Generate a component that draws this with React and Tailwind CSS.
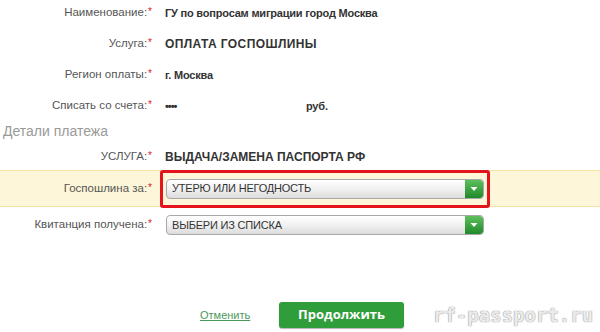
import React from "react";

const Star = () => <span className="text-[#e02020] align-top text-[10px] ml-[1px]">*</span>;

function Row({ label, children, className = "", small = false }) {
  return (
    <div className={`flex items-center ${className}`}>
      <div className="w-[152px] text-right text-[11.5px] text-[#555] pr-0">
        {label}:<Star />
      </div>
      <div className={`pl-[13px] font-bold text-[#333] flex items-center ${small ? "text-[11px] tracking-[-0.2px]" : "text-[12px]"}`}>{children}</div>
    </div>
  );
}

function Select({ text }) {
  return (
    <div className="w-[318px] h-[20px] rounded-[4px] border border-[#a8a8a8] bg-gradient-to-b from-[#ffffff] via-[#f1f1f1] to-[#dcdcdc] flex items-center justify-between overflow-hidden shadow-[inset_0_1px_0_#fff]">
      <span className="pl-[5px] text-[11px] tracking-[-0.2px] text-[#333] font-normal">{text}</span>
      <div className="w-[18px] h-full bg-gradient-to-b from-[#5cc05c] to-[#1e8a2a] flex items-center justify-center rounded-r-[3px]">
        <svg width="8" height="6" viewBox="0 0 8 6"><path d="M0.5 1 L7.5 1 L4 5 Z" fill="#fff" /></svg>
      </div>
    </div>
  );
}

export default function App() {
  return (
    <div className="w-[600px] h-[332px] bg-white overflow-hidden relative" style={{ fontFamily: '"Liberation Sans", Arial, sans-serif' }}>
      <div className="flex flex-col">
        <Row small label="Наименование" className="h-[14px] mt-[6px]">ГУ по вопросам миграции город Москва</Row>
        <Row label="Услуга" className="h-[14px] mt-[17px]"><span className="tracking-[0.4px]">ОПЛАТА ГОСПОШЛИНЫ</span></Row>
        <Row small label="Регион оплаты" className="h-[14px] mt-[17px]">г. Москва</Row>
        <Row small label="Списать со счета" className="h-[14px] mt-[17px]">
          <span className="w-[141px] tracking-[-1px]">••••</span>
          <span>руб.</span>
        </Row>
        <div className="mt-[10px] pl-[3px] text-[14px] text-[#9a9a9a] h-[16px] leading-[16px]">Детали платежа</div>
        <Row label="УСЛУГА" className="h-[14px] mt-[11px]">ВЫДАЧА/ЗАМЕНА ПАСПОРТА РФ</Row>
        <div className="mt-[6px] h-[37px] bg-[#fdf6d8] border-y border-[#f3e2a6] flex items-center relative">
          <div className="w-[152px] text-right text-[11.5px] text-[#555]">
            Госпошлина за:<Star />
          </div>
          <div className="ml-[8px] border-[3px] border-[#e3141c] rounded-[3px] px-[3px] py-[6px]">
            <Select text="УТЕРЮ ИЛИ НЕГОДНОСТЬ" />
          </div>
        </div>
        <div className="mt-[8px] flex items-center h-[20px]">
          <div className="w-[152px] text-right text-[11.5px] text-[#555]">
            Квитанция получена:<Star />
          </div>
          <div className="ml-[14px]">
            <Select text="ВЫБЕРИ ИЗ СПИСКА" />
          </div>
        </div>
        <div className="mt-[67px] flex items-center h-[26px]">
          <a className="ml-[200px] w-[45px] text-[11px] text-[#4a9a5a] underline whitespace-nowrap">Отменить</a>
          <button className="ml-[34px] w-[125px] h-[26px] rounded-[3px] bg-[#2f9d3a] text-white text-[13px] font-bold shadow-[0_1px_1px_rgba(0,0,0,0.3)]" style={{ fontFamily: '"Open Sans", sans-serif' }}>Продолжить</button>
          <span className="ml-[29px] whitespace-nowrap text-[19px] font-bold text-[#ebebeb]" style={{ fontFamily: '"DejaVu Sans Mono", monospace', textShadow: "0 0 1px #999, 0 0 1px #999" }}>rf-passport.ru</span>
        </div>
      </div>
    </div>
  );
}
